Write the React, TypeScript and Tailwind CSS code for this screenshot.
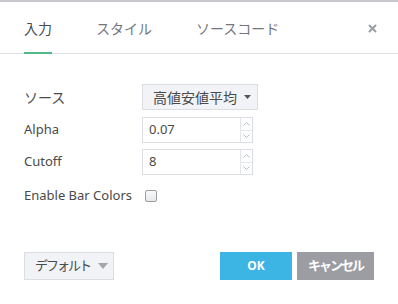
import { useState } from "react";

const font = { fontFamily: '"Noto Sans", "Noto Sans CJK JP", sans-serif' };

const Spinner = () => (
    <div className="flex flex-col w-[12px] border-l border-[#e3e6ea]">
        <div className="flex-1 flex items-center justify-center">
            <svg width="7" height="4" viewBox="0 0 7 4"><path d="M0.5 3.5 L3.5 0.5 L6.5 3.5" fill="none" stroke="#b8bcc2" strokeWidth="1" /></svg>
        </div>
        <div className="flex-1 flex items-center justify-center border-t border-[#e3e6ea]">
            <svg width="7" height="4" viewBox="0 0 7 4"><path d="M0.5 0.5 L3.5 3.5 L6.5 0.5" fill="none" stroke="#b8bcc2" strokeWidth="1" /></svg>
        </div>
    </div>
)

const NumberInput = ({ value }: { value: string }) => (
    <div className="flex w-[111px] h-[26px] border border-[#dadde2] bg-white">
        <div className="flex-1 flex items-center pl-[6px] text-[13px] text-[#4a4a4a]">{value}</div>
        <Spinner />
    </div>
)

const App = () => {
    const [tab] = useState(0);
    const tabs = ["入力", "スタイル", "ソースコード"];
    return (
        <div className="w-[398px] h-[304px] bg-white border-t-2 border-[#c6c8cc] flex flex-col" style={font}>
            <div className="flex items-stretch h-[52px] border-b border-[#e0e3e6] pl-[24px] pr-[21px] pt-[2px]">
                {tabs.map((t, i) => (
                    <div key={t} className={`relative flex items-center text-[14px] mr-[44px] ${i === tab ? "text-[#4a4d52]" : "text-[#73777d]"}`}>
                        {t}
                        {i === tab && <div className="absolute left-0 right-0 bottom-[-1px] h-[2px] bg-[#53b987]" />}
                    </div>
                ))}
                <div className="ml-auto flex items-center">
                    <svg width="9" height="9" viewBox="0 0 9 9"><path d="M1 1 L8 8 M8 1 L1 8" stroke="#9a9ea5" strokeWidth="2" /></svg>
                </div>
            </div>

            <div className="flex flex-col pl-[24px] pt-[30px]">
                <div className="flex items-center h-[26px]">
                    <div className="w-[118px] text-[14px] text-[#4a4a4a]">ソース</div>
                    <div className="flex items-center whitespace-nowrap h-[26px] w-[116px] bg-[#f1f3f6] border border-[#dadde2] pl-[10px] text-[14px] text-[#4a4a4a]">
                        高値安値平均
                        <svg className="ml-[7px]" width="7" height="4" viewBox="0 0 7 4"><path d="M0 0 H7 L3.5 4 Z" fill="#555" /></svg>
                    </div>
                </div>
                <div className="flex items-center mt-[7px]">
                    <div className="w-[118px] text-[13px] text-[#4a4a4a]">Alpha</div>
                    <NumberInput value="0.07" />
                </div>
                <div className="flex items-center mt-[6px]">
                    <div className="w-[118px] text-[13px] text-[#4a4a4a]">Cutoff</div>
                    <NumberInput value="8" />
                </div>
                <div className="flex items-center h-[26px] mt-[8px]">
                    <div className="text-[13px] text-[#4a4a4a] mr-[13px]">Enable Bar Colors</div>
                    <div className="w-[12px] h-[12px] rounded-[2px] border border-[#9a9da2] bg-gradient-to-b from-[#fafafa] to-[#e6e7e9]" />
                </div>
            </div>

            <div className="mt-auto mb-[24px] flex items-center px-[24px]">
                <div className="flex items-center whitespace-nowrap h-[28px] w-[90px] bg-[#f1f3f6] border border-[#dadde2] pl-[10px] text-[13px] tracking-[-2px] text-[#4a4a4a]">
                    デフォルト
                    <svg className="ml-[8px]" width="10" height="6" viewBox="0 0 10 6"><path d="M0 0 H10 L5 6 Z" fill="#a3a6ab" /></svg>
                </div>
                <div className="ml-auto flex items-center justify-center h-[28px] w-[72px] bg-[#3cb4e4] text-white text-[12px] font-bold">OK</div>
                <div className="ml-[5px] flex items-center justify-center whitespace-nowrap h-[28px] w-[77px] bg-[#9b9da3] text-white text-[13px] tracking-[-2px] font-bold">キャンセル</div>
            </div>
        </div>
    )
}

export default App;
